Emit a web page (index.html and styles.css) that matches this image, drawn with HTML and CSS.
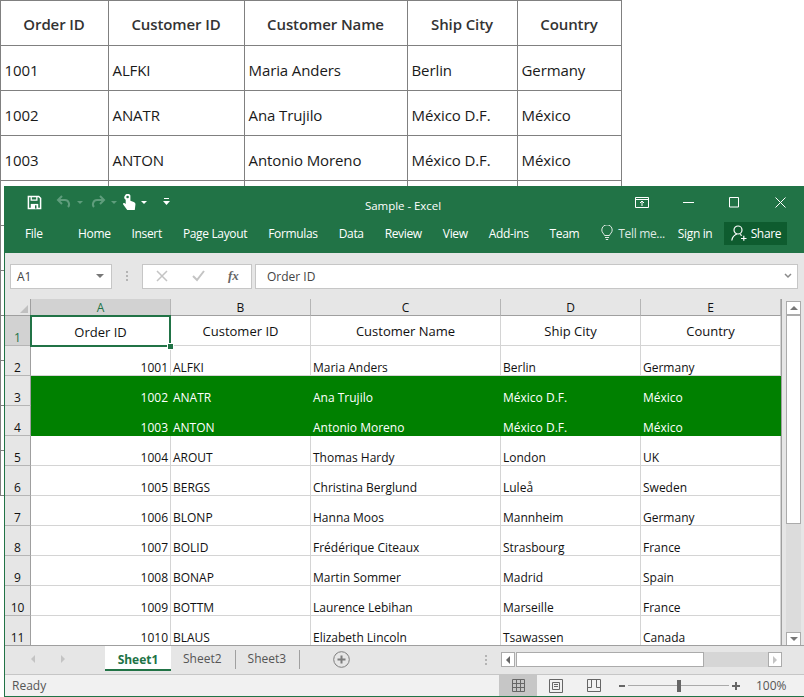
FILE: index.html
```html
<!DOCTYPE html>
<html lang="en">
<head>
    <meta charset="UTF-8">
    <meta name="viewport" content="width=device-width, initial-scale=1.0">
    <title>Sample - Excel</title>
    <link rel="stylesheet" href="styles.css">
</head>
<body>
    <table class="web-table">
        <thead>
            <tr><th class="c1">Order ID</th><th class="c2">Customer ID</th><th class="c3">Customer Name</th><th class="c4">Ship City</th><th class="c5">Country</th></tr>
        </thead>
        <tbody>
            <tr><td>1001</td><td>ALFKI</td><td>Maria Anders</td><td>Berlin</td><td>Germany</td></tr>
            <tr><td>1002</td><td>ANATR</td><td>Ana Trujilo</td><td>México D.F.</td><td>México</td></tr>
            <tr><td>1003</td><td>ANTON</td><td>Antonio Moreno</td><td>México D.F.</td><td>México</td></tr>
            <!-- the rest of the rows sit behind the window, only their lines show -->
            <tr><td></td><td></td><td></td><td></td><td></td></tr>
            <tr><td></td><td></td><td></td><td></td><td></td></tr>
            <tr><td></td><td></td><td></td><td></td><td></td></tr>
            <tr><td></td><td></td><td></td><td></td><td></td></tr>
            <tr><td></td><td></td><td></td><td></td><td></td></tr>
            <tr><td></td><td></td><td></td><td></td><td></td></tr>
            <tr><td></td><td></td><td></td><td></td><td></td></tr>
        </tbody>
    </table>

    <div class="window">
        <div class="titlebar">
            <div class="qat">
                <svg class="ic-save" width="15" height="15" viewBox="0 0 16 16" fill="none" stroke="#fff" stroke-width="1.6"><path d="M1.5 1.5h11l2 2v11h-13z"/><path d="M4.5 1.5v4h6v-4" stroke-width="1.4"/><path d="M4 14.5v-5h8v5" fill="#fff" stroke="none"/><path d="M8.5 11h1.6v3.5H8.5z" fill="#217346" stroke="none"/></svg>
                <svg class="ic-undo" width="16" height="14" viewBox="0 0 16 14" fill="none" stroke="#5f9d7c" stroke-width="2"><path d="M6 1 2 5l4 4"/><path d="M2 5h7a4.2 4.2 0 0 1 3 7"/></svg>
                <span class="mini-caret dim"></span>
                <svg class="ic-redo" width="16" height="14" viewBox="0 0 16 14" fill="none" stroke="#5f9d7c" stroke-width="2"><path d="m10 1 4 4-4 4"/><path d="M14 5H7a4.2 4.2 0 0 0-3 7"/></svg>
                <span class="mini-caret dim"></span>
                <svg class="ic-touch" width="14" height="17" viewBox="0 0 14 17" fill="#fff"><path d="M3 1.5a3 3 0 0 1 5.4 0v5.2l3.4 1.2c1.4.5 1.8 1.600 1.600 2.800L12.800 16H5.200L1.200 10.500c-.6-1 .5-2 1.500-1.300l1 .8V5.800A3 3 0 0 1 3 1.500z"/><circle cx="5.600" cy="3" r="1.300" fill="#217346"/></svg>
                <span class="mini-caret"></span>
                <svg class="ic-more" width="7" height="8" viewBox="0 0 7 8" fill="#fff"><path d="M1 0h5v1H1zM0 3h7L3.500 7z"/></svg>
            </div>
            <div class="doc-title">Sample - Excel</div>
            <div class="win-btns">
                <svg class="ic-restore" width="14" height="11" viewBox="0 0 14 11" fill="none" stroke="#fff"><path d="M.5.500h13v10H.5zM.5 2.500h13M7 9V4.500M5 6l2-2 2 2"/></svg>
                <svg width="11" height="11" viewBox="0 0 11 11" stroke="#fff"><path d="M0 5.500h11"/></svg>
                <svg width="11" height="11" viewBox="0 0 11 11" fill="none" stroke="#fff"><path d="M.5.500h9v9.500h-9z"/></svg>
                <svg width="11" height="11" viewBox="0 0 11 11" stroke="#fff"><path d="m.5.500 10 10m0-10-10 10"/></svg>
            </div>
        </div>

        <div class="tabs">
            <span class="tab-file">File</span>
            <nav class="tab-list">
                <span>Home</span><span>Insert</span><span>Page Layout</span><span>Formulas</span><span>Data</span><span>Review</span><span>View</span><span>Add-ins</span><span>Team</span>
            </nav>
            <div class="tell">
                <svg width="12" height="16" viewBox="0 0 12 16" fill="none" stroke="#dfe9e3"><path d="M3.500 10.500C3 8.500.8 7.800.8 5a5.200 5.200 0 0 1 10.400 0c0 2.800-2.200 3.500-2.700 5.500zM4 12.500h4M4.800 14.500h2.400"/></svg>
                <span>Tell me...</span>
            </div>
            <span class="sign-in">Sign in</span>
            <div class="share">
                <svg width="16" height="16" viewBox="0 0 16 16" fill="none" stroke="#fff" stroke-width="1.200"><circle cx="7" cy="5" r="4"/><path d="M.8 15.500c.5-3.500 2.500-5.500 5-6.500M9 9.500c.7.300 1.300.6 1.800 1.100M10 13.500h5.500M12.800 10.800v5"/></svg>
                <span>Share</span>
            </div>
        </div>

        <div class="formula-bar">
            <div class="name-box"><span>A1</span><i class="down-caret"></i></div>
            <div class="grip"></div>
            <div class="fx-box">
                <svg width="12" height="12" viewBox="0 0 12 12" stroke="#c4c4c4" stroke-width="1.500"><path d="m1 1 10 10m0-10L1 11"/></svg>
                <svg width="13" height="12" viewBox="0 0 13 12" fill="none" stroke="#c4c4c4" stroke-width="2"><path d="m1 6 4 4 7-9"/></svg>
                <span class="fx">fx</span>
            </div>
            <div class="formula-input">
                <span>Order ID</span>
                <svg width="8" height="6" viewBox="0 0 8 6" fill="none" stroke="#8a8a8a" stroke-width="1.500"><path d="m1 1 3 3 3-3"/></svg>
            </div>
        </div>

        <div class="sheet-area">
            <div class="sheet">
                <div class="corner"><i></i></div>
                <div class="col-head active">A</div><div class="col-head">B</div><div class="col-head">C</div><div class="col-head">D</div><div class="col-head">E</div>

                <div class="row-head first"><b>1</b></div>
                <div class="cell center selected">Order ID<i class="handle"></i></div><div class="cell center">Customer ID</div><div class="cell center">Customer Name</div><div class="cell center">Ship City</div><div class="cell center">Country</div>

                <div class="row-head">2</div>
                <div class="cell num">1001</div><div class="cell">ALFKI</div><div class="cell">Maria Anders</div><div class="cell">Berlin</div><div class="cell">Germany</div>
                <div class="row-head">3</div>
                <div class="cell num hl">1002</div><div class="cell hl">ANATR</div><div class="cell hl">Ana Trujilo</div><div class="cell hl">México D.F.</div><div class="cell hl">México</div>
                <div class="row-head">4</div>
                <div class="cell num hl">1003</div><div class="cell hl">ANTON</div><div class="cell hl">Antonio Moreno</div><div class="cell hl">México D.F.</div><div class="cell hl">México</div>
                <div class="row-head">5</div>
                <div class="cell num">1004</div><div class="cell">AROUT</div><div class="cell">Thomas Hardy</div><div class="cell">London</div><div class="cell">UK</div>
                <div class="row-head">6</div>
                <div class="cell num">1005</div><div class="cell">BERGS</div><div class="cell">Christina Berglund</div><div class="cell">Luleå</div><div class="cell">Sweden</div>
                <div class="row-head">7</div>
                <div class="cell num">1006</div><div class="cell">BLONP</div><div class="cell">Hanna Moos</div><div class="cell">Mannheim</div><div class="cell">Germany</div>
                <div class="row-head">8</div>
                <div class="cell num">1007</div><div class="cell">BOLID</div><div class="cell">Frédérique Citeaux</div><div class="cell">Strasbourg</div><div class="cell">France</div>
                <div class="row-head">9</div>
                <div class="cell num">1008</div><div class="cell">BONAP</div><div class="cell">Martin Sommer</div><div class="cell">Madrid</div><div class="cell">Spain</div>
                <div class="row-head">10</div>
                <div class="cell num">1009</div><div class="cell">BOTTM</div><div class="cell">Laurence Lebihan</div><div class="cell">Marseille</div><div class="cell">France</div>
                <div class="row-head">11</div>
                <div class="cell num">1010</div><div class="cell">BLAUS</div><div class="cell">Elizabeth Lincoln</div><div class="cell">Tsawassen</div><div class="cell">Canada</div>
            </div>
            <div class="vscroll">
                <div class="sb-btn"><i class="tri-up"></i></div>
                <div class="v-thumb"></div>
                <div class="v-track"></div>
                <div class="sb-btn"><i class="tri-down"></i></div>
            </div>
        </div>

        <div class="sheet-tabs">
            <div class="tab-nav"><i class="tri-left pale"></i><i class="tri-right pale"></i></div>
            <span class="stab current">Sheet1</span>
            <span class="stab">Sheet2</span>
            <span class="stab">Sheet3</span>
            <svg class="add-sheet" width="17" height="17" viewBox="0 0 17 17" fill="none" stroke="#7d7d7d"><circle cx="8.500" cy="8.500" r="7.800"/><path d="M8.500 4.500v8M4.500 8.500h8" stroke-width="2"/></svg>
            <div class="grip tabs-grip"></div>
            <div class="hscroll">
                <div class="sb-btn h"><i class="tri-left"></i></div>
                <div class="h-thumb"></div>
                <div class="h-track"></div>
                <div class="sb-btn h"><i class="tri-right pale"></i></div>
            </div>
        </div>

        <div class="statusbar">
            <span class="ready">Ready</span>
            <div class="view-btn on">
                <svg width="13" height="13" viewBox="0 0 13 13" fill="none" stroke="#666"><path d="M.5.500h12v12H.5zM4.500.500v12M8.500.500v12M.5 4.500h12M.5 8.500h12"/></svg>
            </div>
            <div class="view-btn">
                <svg width="15" height="14" viewBox="0 0 15 14" fill="none" stroke="#666"><path d="M.5.500h13v13H.5zM3.500 3.500h7v7h-7zM5 5.500h4M5 7.500h4"/></svg>
            </div>
            <div class="view-btn">
                <svg width="14" height="13" viewBox="0 0 14 13" fill="none" stroke="#666"><path d="M.5.500h13v12H.5zM.5 8.500h4v-8M9.500.500v8h4"/></svg>
            </div>
            <div class="zoom">
                <i class="zoom-minus"></i>
                <div class="zoom-line"><i></i></div>
                <svg width="8" height="8" viewBox="0 0 8 8" stroke="#666" stroke-width="2"><path d="M4 0v8M0 4h8"/></svg>
            </div>
            <span class="pct">100%</span>
        </div>
    </div>
</body>
</html>
```

FILE: styles.css
```css
body {
    font-family: "Open Sans", "Noto Sans", sans-serif;
    margin: 0;
    width: 804px;
    height: 697px;
    overflow: hidden;
    background: #fff;
    color: #1a1a1a;
}

/* page behind the Excel window */
.web-table {
    border-collapse: collapse;
    table-layout: fixed;
    width: 622px;
    margin-left: -0.5px;
    font-size: 15px;
    letter-spacing: -0.1px;
}

.web-table th,
.web-table td {
    border: 1px solid #808080;
    padding: 3px 0 0 4px;
    box-sizing: border-box;
    height: 45px;
    text-align: left;
    font-weight: 400;
    white-space: nowrap;
    overflow: hidden;
}

.web-table th {
    font-weight: 600;
    text-align: center;
    padding: 2px 0 0 0;
    color: #333;
}

.c1 { width: 108px; }
.c2 { width: 136px; }
.c3 { width: 163px; }
.c4 { width: 110px; }
.c5 { width: 104px; }

/* excel window */
.window {
    position: absolute;
    left: 4px;
    top: 186px;
    width: 800px;
    height: 511px;
    box-sizing: border-box;
    border-left: 1px solid #217346;
    border-bottom: 1px solid #217346;
    background: #e6e6e6;
    display: flex;
    flex-direction: column;
    font-size: 12px;
}

.titlebar {
    height: 32px;
    background: #217346;
    color: #fff;
    display: flex;
    align-items: center;
    flex: none;
}

.qat {
    width: 311px;
    padding-left: 22px;
    display: flex;
    align-items: center;
}

.ic-undo { margin-left: 14px; }
.ic-redo { margin-left: 7px; }
.ic-touch { margin-left: 5px; }
.ic-more { margin-left: 16px; }
.ic-restore { margin-right: -1px; }

.mini-caret {
    width: 0;
    height: 0;
    margin-left: 5px;
    border-left: 3px solid transparent;
    border-right: 3px solid transparent;
    border-top: 3px solid #fff;
}

.mini-caret.dim {
    border-top-color: #5f9d7c;
}

.doc-title {
    width: 140px;
    text-align: center;
    font-size: 11.500px;
    letter-spacing: -0.050px;
    padding-top: 6px;
    margin-left: -5px;
}

.win-btns {
    margin-left: 162px;
    display: flex;
    align-items: center;
    gap: 35px;
}

.tabs {
    height: 35px;
    background: #217346;
    color: #fff;
    display: flex;
    align-items: center;
    flex: none;
    letter-spacing: -0.340px;
    padding-bottom: 5px;
    box-sizing: border-box;
}

.tab-file {
    margin-left: 20px;
    width: 53px;
}

.tab-list {
    display: flex;
    gap: 21px;
}

.tell {
    margin-left: 22px;
    display: flex;
    align-items: center;
    gap: 5px;
    color: #dfe9e3;
}

.sign-in {
    margin-left: 13px;
}

.share {
    margin-left: 12px;
    width: 63px;
    height: 23px;
    background: #0e5c2f;
    display: flex;
    align-items: center;
    justify-content: center;
    gap: 4px;
}

.formula-bar {
    height: 46px;
    flex: none;
    display: flex;
    align-items: center;
    padding: 0 6px 0 5px;
    box-sizing: border-box;
    color: #444;
}

.name-box,
.fx-box,
.formula-input {
    height: 25px;
    box-sizing: border-box;
    background: #fff;
    border: 1px solid #c6c6c6;
    display: flex;
    align-items: center;
}

.name-box {
    width: 102px;
    padding: 0 7px 0 6px;
    justify-content: space-between;
}

.down-caret {
    width: 0;
    height: 0;
    border-left: 4px solid transparent;
    border-right: 4px solid transparent;
    border-top: 4px solid #777;
}

.grip {
    width: 2px;
    height: 10px;
    margin: 0 14px;
    background: repeating-linear-gradient(#b4b4b4 0 2px, transparent 2px 4px);
}

.fx-box {
    width: 110px;
    padding-left: 13px;
    gap: 24px;
}

.fx {
    font-family: "Liberation Serif", serif;
    font-style: italic;
    font-weight: 700;
    font-size: 13px;
    color: #666;
    margin-left: -1px;
}

.formula-input {
    flex: 1;
    margin-left: 3px;
    padding: 0 5px 0 11px;
    justify-content: space-between;
}

.sheet-area {
    height: 347px;
    flex: none;
    background: #e6e6e6;
    display: flex;
    overflow: hidden;
}

.sheet {
    display: grid;
    grid-template-columns: 26px 140px 140px 190px 140px 140px;
    grid-template-rows: 17px repeat(11, 30px);
    border-right: 1px solid #9f9f9f;
    color: #111;
}

.corner {
    border-bottom: 1px solid #9f9f9f;
    border-right: 1px solid #9f9f9f;
    position: relative;
}

.corner i {
    position: absolute;
    right: 2px;
    bottom: 2px;
    border-left: 8px solid transparent;
    border-bottom: 8px solid #c0c0c0;
}

.col-head {
    background: #e6e6e6;
    border-bottom: 1px solid #9f9f9f;
    border-right: 1px solid #b5b5b5;
    text-align: center;
    line-height: 17px;
}

.col-head.active {
    background: #d2d2d2;
    color: #217346;
}

.row-head {
    border-right: 1px solid #9f9f9f;
    border-bottom: 1px solid #b5b5b5;
    display: flex;
    align-items: flex-end;
    justify-content: center;
    line-height: 14px;
    box-sizing: border-box;
}

.row-head.first {
    background: #d2d2d2;
    color: #217346;
}

.row-head b {
    font-weight: 400;
}

.cell {
    background: #fff;
    border-right: 1px solid #d4d4d4;
    border-bottom: 1px solid #d4d4d4;
    display: flex;
    align-items: flex-end;
    padding: 0 2px;
    line-height: 14px;
    box-sizing: border-box;
    white-space: nowrap;
}

.cell.center {
    align-items: center;
    justify-content: center;
    padding: 1px 0 0 0;
    font-size: 13px;
}

.cell.num {
    justify-content: flex-end;
}

.cell.hl {
    background: #008000;
    color: #fff;
    border-color: #008000;
}

.cell.selected {
    border: 2px solid #217346;
    position: relative;
    margin: -1px 0 -1px -1px;
    z-index: 1;
}

.handle {
    position: absolute;
    right: -5px;
    bottom: -5px;
    width: 5px;
    height: 5px;
    background: #217346;
    border: 1px solid #fff;
}

.vscroll {
    width: 15px;
    margin: 2px 0 0 4px;
    display: flex;
    flex-direction: column;
    flex: none;
    height: 345px;
}

.sb-btn {
    height: 14px;
    flex: none;
    box-sizing: border-box;
    background: #fff;
    border: 1px solid #ababab;
    display: flex;
    align-items: center;
    justify-content: center;
}

.sb-btn.h {
    width: 14px;
    height: 15px;
}

.v-thumb {
    height: 209px;
    box-sizing: border-box;
    flex: none;
    background: #fff;
    border: 1px solid #ababab;
}

.v-track {
    flex: 1;
    background: #dcdcdc;
}

.tri-up,
.tri-down,
.tri-left,
.tri-right {
    width: 0;
    height: 0;
    display: block;
}

.tri-up {
    border-left: 4px solid transparent;
    border-right: 4px solid transparent;
    border-bottom: 4px solid #777;
}

.tri-down {
    border-left: 4px solid transparent;
    border-right: 4px solid transparent;
    border-top: 4px solid #777;
}

.tri-left {
    border-top: 4px solid transparent;
    border-bottom: 4px solid transparent;
    border-right: 4px solid #666;
}

.tri-right {
    border-top: 4px solid transparent;
    border-bottom: 4px solid transparent;
    border-left: 4px solid #666;
}

.tri-left.pale { border-right-color: #c4c4c4; }
.tri-right.pale { border-left-color: #c4c4c4; }

.sheet-tabs {
    flex: none;
    border-top: 1px solid #9f9f9f;
    border-bottom: 1px solid #c6c6c6;
    box-sizing: border-box;
    height: 30px;
    margin-top: -1px;
    display: flex;
    align-items: flex-start;
}

.tab-nav {
    width: 100px;
    display: flex;
    gap: 26px;
    padding: 9px 0 0 26px;
    box-sizing: border-box;
}

.stab {
    height: 19px;
    margin-top: 4px;
    padding: 0 13px 0 12px;
    line-height: 17px;
    border-right: 1px solid #a0a0a0;
    color: #555;
}

.stab.current {
    height: 25px;
    margin-top: 0;
    line-height: 27px;
    width: 66px;
    padding: 0;
    text-align: center;
    box-sizing: border-box;
    background: #fff;
    color: #217346;
    font-weight: 700;
    border-right: none;
    border-bottom: 2px solid #217346;
}

.add-sheet {
    margin: 5px 0 0 33px;
}

.tabs-grip {
    margin: 9px 14px 0 135px;
}

.hscroll {
    margin-top: 6px;
    width: 281px;
    display: flex;
}

.h-thumb {
    width: 188px;
    box-sizing: border-box;
    background: #fff;
    border: 1px solid #ababab;
    margin-left: 1px;
    height: 15px;
}

.h-track {
    flex: 1;
    background: #d6d6d6;
    height: 15px;
}

.statusbar {
    flex: 1;
    background: #f1f1f1;
    display: flex;
    align-items: center;
    color: #555;
}

.ready {
    width: 494px;
    padding-left: 7px;
    box-sizing: border-box;
}

.view-btn {
    width: 38px;
    height: 100%;
    display: flex;
    align-items: center;
    justify-content: center;
}

.view-btn.on {
    background: #c6c6c6;
}

.zoom {
    margin-left: 6px;
    display: flex;
    align-items: center;
    gap: 3px;
}

.zoom-minus {
    width: 6px;
    height: 2px;
    background: #666;
}

.zoom-line {
    width: 101px;
    height: 1px;
    background: #aaa;
    display: flex;
    justify-content: center;
    align-items: center;
}

.zoom-line i {
    width: 4px;
    height: 12px;
    background: #666;
}

.pct {
    margin-left: 16px;
}
```
